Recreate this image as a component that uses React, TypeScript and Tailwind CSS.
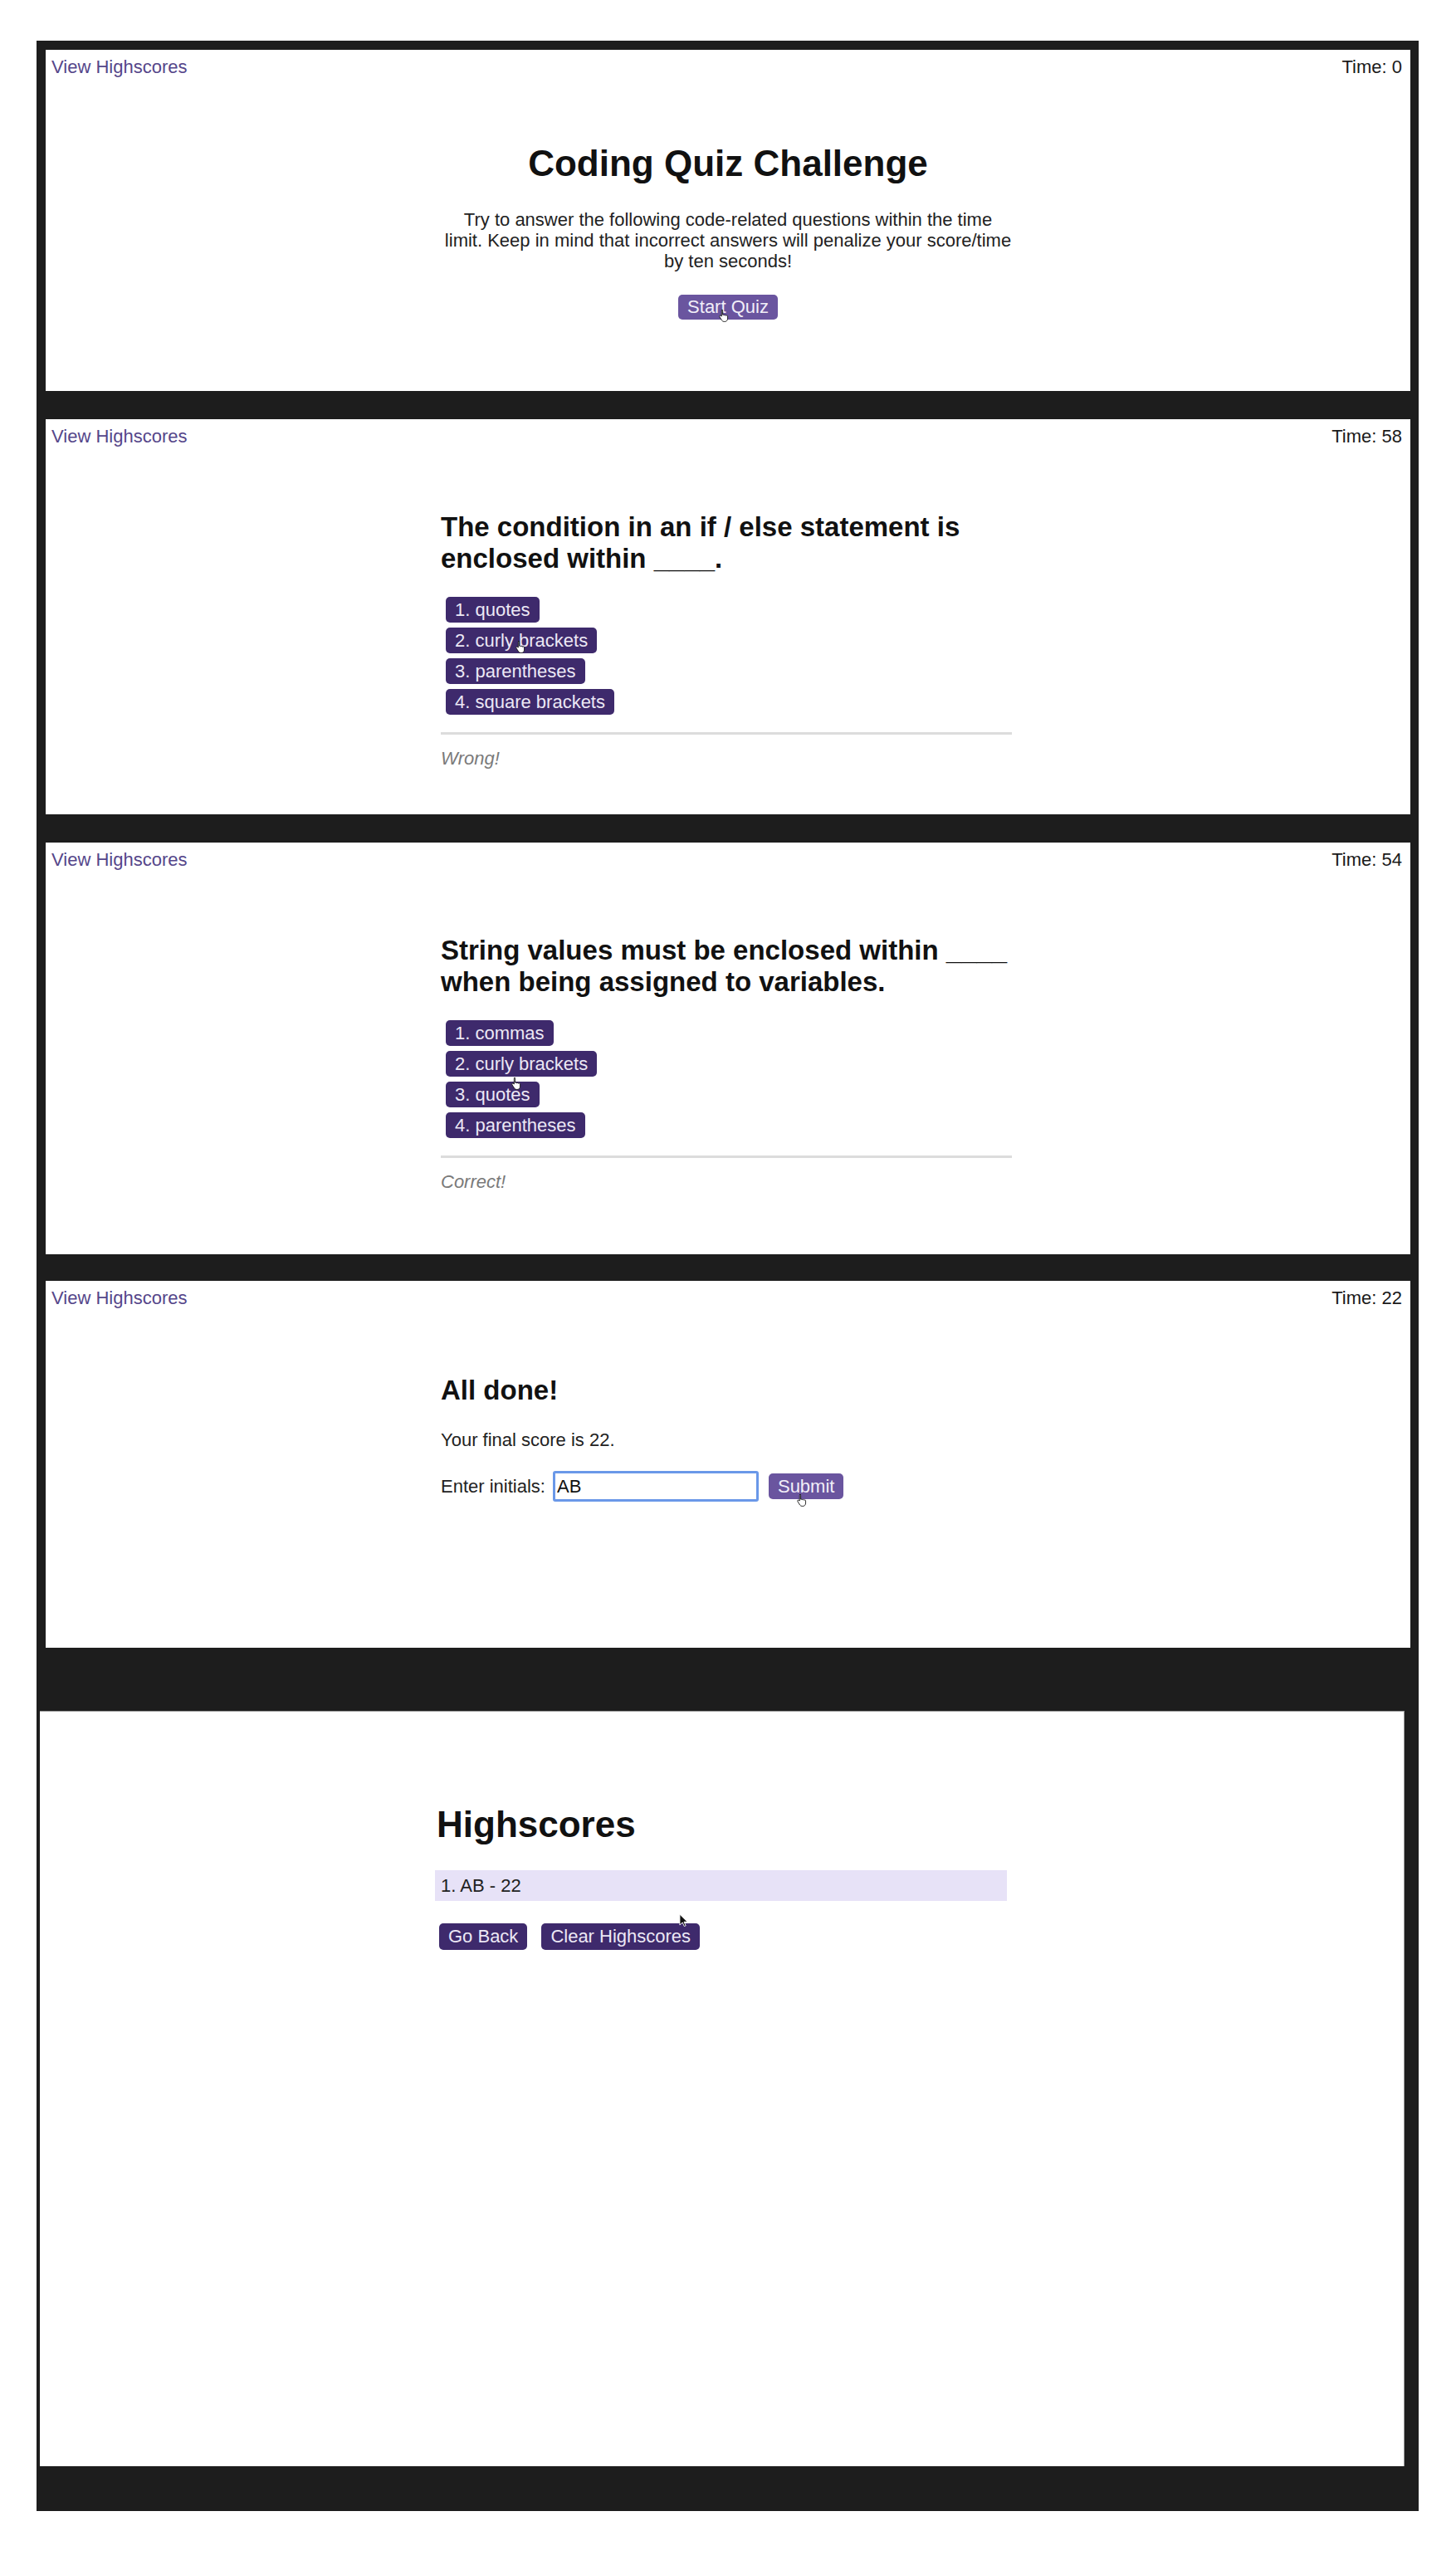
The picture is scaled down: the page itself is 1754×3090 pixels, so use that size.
import React from "react";

const dark = "bg-[#3e2a6c]";
const light = "bg-[#6a559f]";

// small hand cursor captured in the recording
const Hand = ({ className }: { className: string }) => (
    <svg viewBox="0 0 16 18" width="14" height="16" className={`absolute ${className}`}>
        <path
            d="M5 1.5c.8 0 1.4.6 1.4 1.4V8l.6-.1c.7 0 1.2.4 1.3 1 .3-.4.7-.6 1.2-.6.6 0 1.1.4 1.2 1 .3-.3.7-.5 1.1-.5.8 0 1.4.6 1.4 1.4v3.3c0 2.3-1.7 4-4 4H8.3c-1.2 0-2.3-.6-3-1.6L2.2 11c-.4-.6-.3-1.4.3-1.8.6-.4 1.4-.3 1.8.3l.6.8V2.9c0-.8.6-1.4 1.4-1.4z"
            fill="#fff"
            stroke="#111"
            strokeWidth="1"
        />
    </svg>
);

const Arrow = ({ className }: { className: string }) => (
    <svg viewBox="0 0 12 18" width="11" height="17" className={`absolute ${className}`}>
        <path d="M1 1v14l3.5-3.3 2.4 5 2-.9-2.3-4.9H11z" fill="#111" stroke="#fff" strokeWidth="1" />
    </svg>
);

const Header = ({ time }: { time: number }) => (
    <div className="flex justify-between pl-[7px] pr-[10px] pt-[8px] text-[22px] leading-[25px]">
        <a href="#" className="text-[#55468a]">View Highscores</a>
        <span className="text-[#1a1a1a]">Time: {time}</span>
    </div>
);

const Answer = ({ label, children }: { label: string; children?: React.ReactNode }) => (
    <button className={`relative self-start ml-[6px] ${dark} text-[#ece8f5] rounded-[5px] px-[11px] py-[3px] text-[22px] leading-[25px]`}>
        {label}
        {children}
    </button>
);

const Question = ({
    text,
    answers,
    feedback,
    time,
    h,
}: {
    text: React.ReactNode;
    answers: React.ReactNode;
    feedback: string;
    time: number;
    h: string;
}) => (
    <section className={`ml-[11px] w-[1644px] ${h} bg-white`}>
        <Header time={time} />
        <div className="ml-[476px] w-[688px] mt-[78px]">
            <h2 className="text-[33px] leading-[38px] font-bold text-[#111]">{text}</h2>
            <div className="flex flex-col gap-[6px] mt-[27px]">{answers}</div>
            <hr className="mt-[21px] h-[3px] border-0 bg-[#dcdcdc]" />
            <p className="mt-[16px] text-[22px] leading-[25px] italic text-[#7a7a7a]">{feedback}</p>
        </div>
    </section>
);

export default function App() {
    return (
        <div className="min-h-[3090px] bg-white pt-[49px] font-['Liberation_Sans',Arial,sans-serif]">
            <div className="ml-[44px] w-[1665px] bg-[#1d1d1d] pt-[11px] pb-[54px] flex flex-col">
                {/* Start screen */}
                <section className="ml-[11px] w-[1644px] h-[411px] bg-white">
                    <Header time={0} />
                    <div className="flex flex-col items-center mt-[79px]">
                        <h1 className="text-[44px] leading-[50px] font-bold text-[#111]">Coding Quiz Challenge</h1>
                        <p className="mt-[30px] text-center text-[22px] leading-[25px] text-[#222]">
                            Try to answer the following code-related questions within the time
                            <br />
                            limit. Keep in mind that incorrect answers will penalize your score/time
                            <br />
                            by ten seconds!
                        </p>
                        <button className={`relative mt-[28px] ${light} text-[#f1eef8] rounded-[5px] px-[11px] py-[3px] text-[22px] leading-[24px]`}>
                            Start Quiz
                            <Hand className="left-[48px] top-[17px]" />
                        </button>
                    </div>
                </section>

                {/* Question 1 */}
                <div className="mt-[34px]">
                    <Question
                        time={58}
                        h="h-[476px]"
                        text="The condition in an if / else statement is enclosed within ____."
                        feedback="Wrong!"
                        answers={
                            <>
                                <Answer label="1. quotes" />
                                <Answer label="2. curly brackets">
                                    <Hand className="left-[83px] top-[15px]" />
                                </Answer>
                                <Answer label="3. parentheses" />
                                <Answer label="4. square brackets" />
                            </>
                        }
                    />
                </div>

                {/* Question 2 */}
                <div className="mt-[34px]">
                    <Question
                        time={54}
                        h="h-[496px]"
                        text="String values must be enclosed within ____ when being assigned to variables."
                        feedback="Correct!"
                        answers={
                            <>
                                <Answer label="1. commas" />
                                <Answer label="2. curly brackets" />
                                <Answer label="3. quotes">
                                    <Hand className="left-[78px] top-[-6px]" />
                                </Answer>
                                <Answer label="4. parentheses" />
                            </>
                        }
                    />
                </div>

                {/* All done */}
                <section className="mt-[32px] ml-[11px] w-[1644px] h-[442px] bg-white">
                    <Header time={22} />
                    <div className="ml-[476px] w-[688px] mt-[80px]">
                        <h2 className="text-[33px] leading-[38px] font-bold text-[#111]">All done!</h2>
                        <p className="mt-[28px] text-[22px] leading-[25px] text-[#222]">Your final score is 22.</p>
                        <div className="mt-[25px] flex items-center text-[22px] leading-[25px] text-[#222]">
                            <label>Enter initials:</label>
                            <input
                                readOnly
                                value="AB"
                                className="ml-[9px] w-[248px] h-[37px] border-[3px] border-[#6a98e8] rounded-[3px] px-[2px] text-[22px] text-[#111] bg-white outline-none"
                            />
                            <button className={`relative ml-[12px] ${light} text-[#f1eef8] rounded-[5px] px-[11px] py-[3px] leading-[25px]`}>
                                Submit
                                <Hand className="left-[33px] top-[24px]" />
                            </button>
                        </div>
                    </div>
                </section>

                {/* Highscores */}
                <section className="mt-[76px] ml-[4px] w-[1644px] h-[910px] bg-white border-t border-r border-[#9a9a9a]">
                    <div className="ml-[476px] w-[689px] pt-[111px]">
                        <h1 className="ml-[2px] text-[44px] leading-[50px] font-bold text-[#111]">Highscores</h1>
                        <ol className="mt-[30px]">
                            <li className="bg-[#e7e2f7] h-[37px] leading-[37px] pl-[7px] text-[22px] text-[#222]">1. AB - 22</li>
                        </ol>
                        <div className="mt-[27px] ml-[5px] flex gap-[17px] text-[22px]">
                            <button className={`${dark} text-[#ece8f5] rounded-[5px] px-[11px] py-[3px] leading-[26px]`}>Go Back</button>
                            <button className={`relative ${dark} text-[#ece8f5] rounded-[5px] px-[11px] py-[3px] leading-[26px]`}>
                                Clear Highscores
                                <Arrow className="left-[166px] top-[-12px]" />
                            </button>
                        </div>
                    </div>
                </section>
            </div>
        </div>
    );
}
